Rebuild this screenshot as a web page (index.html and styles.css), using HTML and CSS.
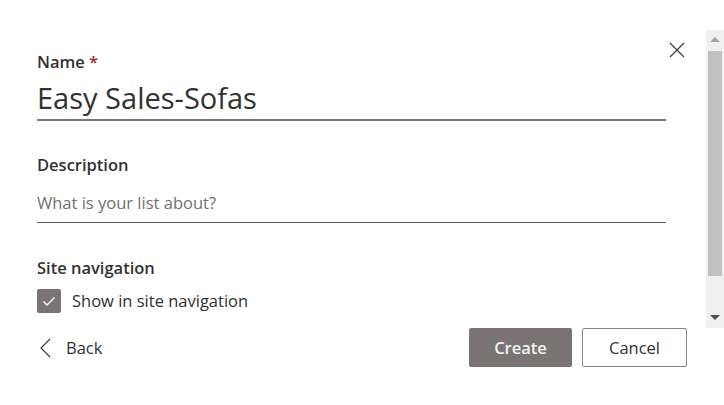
FILE: index.html
```html
<!DOCTYPE html>
<html>
<head>
<meta charset="utf-8">
<link rel="stylesheet" href="styles.css">
</head>
<body>
<div class="panel">
  <div class="content">
    <button class="close" aria-label="Close">
      <svg width="16" height="16" viewBox="0 0 16 16"><path d="M1 1 L15 15 M15 1 L1 15" stroke="#3b3a39" stroke-width="1.2" fill="none"/></svg>
    </button>
    <div class="field">
      <div class="label">Name <span class="req">*</span></div>
      <div class="title-input">Easy Sales-Sofas</div>
    </div>
    <div class="field desc">
      <div class="label">Description</div>
      <div class="desc-input">What is your list about?</div>
    </div>
    <div class="field nav">
      <div class="label">Site navigation</div>
      <div class="check-row">
        <span class="checkbox">
          <svg width="16" height="16" viewBox="0 0 16 16"><path d="M2.5 8.5 L6 12 L13.5 4.5" stroke="#fff" stroke-width="1.3" fill="none"/></svg>
        </span>
        <span class="check-label">Show in site navigation</span>
      </div>
    </div>
    <div class="footer">
      <div class="back">
        <svg width="14" height="20" viewBox="0 0 14 20"><path d="M11 1 L2 10 L11 19" stroke="#3b3a39" stroke-width="1.2" fill="none"/></svg>
        <span>Back</span>
      </div>
      <div class="buttons">
        <button class="btn primary">Create</button>
        <button class="btn secondary">Cancel</button>
      </div>
    </div>
  </div>
  <div class="scrollbar">
    <div class="arrow up"></div>
    <div class="track"><div class="thumb"></div></div>
    <div class="arrow down"></div>
  </div>
</div>
</body>
</html>
```
FILE: styles.css
```css
html, body {
  margin: 0;
  padding: 0;
  background: #fff;
}
body {
  font-family: "Open Sans", "Noto Sans", sans-serif;
  color: #323130;
  width: 724px;
  height: 405px;
  overflow: hidden;
}
.panel {
  display: flex;
  height: 405px;
}
.content {
  position: relative;
  flex: 1;
  padding: 50px 0 0 37px;
}
.close {
  position: absolute;
  left: 669px;
  top: 42px;
  width: 16px;
  height: 16px;
  padding: 0;
  border: none;
  background: none;
}
.close svg { display: block; }
.field {
  width: 629px;
}
.label {
  font-size: 16.5px;
  font-weight: 600;
  line-height: 24px;
}
.req { color: #a4262c; }
.title-input {
  margin-top: 6px;
  font-size: 29px;
  line-height: 36px;
  padding-bottom: 3px;
  border-bottom: 2px solid #7a7574;
}
.desc { margin-top: 32px; }
.desc-input {
  margin-top: 14px;
  font-size: 16.5px;
  line-height: 24px;
  color: #707070;
  padding-bottom: 7px;
  border-bottom: 1px solid #605e5c;
}
.nav { margin-top: 33px; }
.check-row {
  display: flex;
  align-items: center;
  margin-top: 9px;
}
.checkbox {
  width: 24px;
  height: 24px;
  border-radius: 2px;
  background: #7a7574;
  display: flex;
  align-items: center;
  justify-content: center;
}
.checkbox svg { display: block; }
.check-label {
  margin-left: 11px;
  font-size: 16.5px;
  line-height: 24px;
}
.footer {
  display: flex;
  align-items: center;
  justify-content: space-between;
  width: 650px;
  margin-top: 15px;
}
.back {
  display: flex;
  align-items: center;
  font-size: 16.5px;
  padding-left: 2px;
}
.back svg { display: block; }
.back span { margin-left: 13px; }
.buttons {
  display: flex;
  gap: 10px;
}
.btn {
  height: 39px;
  font-family: "Open Sans", "Noto Sans", sans-serif;
  font-size: 16.5px;
  border-radius: 2px;
  padding: 0;
}
.primary {
  width: 103px;
  background: #7a7574;
  color: #f3f2f1;
  border: none;
  font-weight: 600;
}
.secondary {
  width: 105px;
  background: #fff;
  color: #323130;
  border: 1px solid #8a8886;
}
.scrollbar {
  width: 18px;
  margin-top: 30px;
  height: 298px;
  background: #f0f0f0;
  display: flex;
  flex-direction: column;
  align-items: center;
}
.arrow {
  width: 0;
  height: 0;
  border-left: 5px solid transparent;
  border-right: 5px solid transparent;
}
.arrow.up {
  margin-top: 7px;
  border-bottom: 5px solid #a3a3a3;
}
.arrow.down {
  margin-bottom: 8px;
  border-top: 5px solid #505050;
}
.track {
  flex: 1;
  width: 100%;
  padding: 9px 2px 0 2px;
  box-sizing: border-box;
}
.thumb {
  height: 225px;
  background: #c1c1c1;
}
```
